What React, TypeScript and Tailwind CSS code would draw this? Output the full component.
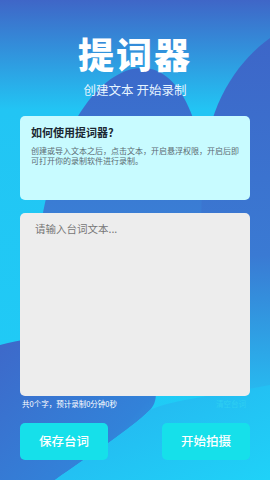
import { useState } from 'react';

function Backdrop() {
  return (
    <svg
      className="absolute inset-0 w-full h-full"
      viewBox="0 0 270 480"
      preserveAspectRatio="none"
      aria-hidden="true"
    >
      <defs>
        <linearGradient id="base" x1="0" y1="0" x2="0" y2="1">
          <stop offset="0" stopColor="#3f66c7" />
          <stop offset="0.23" stopColor="#22c5f4" />
          <stop offset="1" stopColor="#1fcdf6" />
        </linearGradient>
        <linearGradient id="hill" x1="0" y1="0" x2="0" y2="1">
          <stop offset="0" stopColor="#3b69ca" />
          <stop offset="1" stopColor="#3a80d6" />
        </linearGradient>
        <linearGradient id="side" x1="0" y1="0" x2="0" y2="1">
          <stop offset="0" stopColor="#3d66c8" />
          <stop offset="0.6" stopColor="#3a7ad3" />
          <stop offset="1" stopColor="#26bdf1" />
        </linearGradient>
        <linearGradient id="low" x1="0" y1="0" x2="1" y2="1">
          <stop offset="0" stopColor="#3e68c9" />
          <stop offset="0.7" stopColor="#3282d9" />
          <stop offset="1" stopColor="#2aa5e8" />
        </linearGradient>
        <linearGradient id="lowright" x1="0" y1="0" x2="1" y2="1">
          <stop offset="0" stopColor="#27b0ee" />
          <stop offset="1" stopColor="#1fd2f8" />
        </linearGradient>
      </defs>
      <rect x="0" y="0" width="270" height="480" fill="url(#base)" />
      <path d="M40 230 C55 130 100 68 142 68 C184 68 205 130 215 230 Z" fill="url(#hill)" />
      <path d="M270 38 C240 60 214 95 205 150 C198 220 200 300 215 400 L270 400 Z" fill="url(#side)" />
      <path d="M0 345 C50 332 110 330 140 360 C158 380 160 400 150 410 C130 430 90 455 55 480 L0 480 Z" fill="url(#low)" />
      <path d="M150 410 C170 400 220 395 270 385 L270 480 L55 480 C90 455 130 430 150 410 Z" fill="url(#lowright)" />
    </svg>
  );
}

export default function App() {
  const [text, setText] = useState('');
  const count = text.replace(/\s/g, '').length;
  const secs = Math.round(count / 4);

  return (
    <div className="relative w-full h-[480px] overflow-hidden font-['Noto_Sans_CJK_SC',sans-serif]">
      <Backdrop />
      <div className="relative flex flex-col px-5">
        <h1 className="pt-[33px] text-center text-[36px] leading-[40px] font-black text-white tracking-[2px]">
          提词器
        </h1>
        <p className="mt-[9px] text-center text-[12.5px] leading-[16px] text-[#e6f4ff]">
          创建文本 开始录制
        </p>

        {/* how-to card */}
        <div className="mt-[18px] h-[84px] rounded-[5px] bg-[#c8fbff] pt-[9px] px-[11px]">
          <p className="text-[11px] leading-[14px] font-bold text-[#1b2832]">如何使用提词器?</p>
          <p className="mt-[7px] text-[8px] leading-[10px] text-[#5b6a72]">
            创建或导入文本之后，点击文本，开启悬浮权限，开启后即可打开你的录制软件进行录制。
          </p>
        </div>

        <textarea
          value={text}
          onChange={(e) => setText(e.target.value)}
          placeholder="请输入台词文本..."
          className="mt-[13px] h-[183px] w-full resize-none rounded-[5px] bg-[#ededed] px-[15px] pt-[9px] text-[10.5px] leading-[14px] text-[#333] placeholder:text-[#767676] outline-none"
        />

        <div className="mt-[3px] flex items-center justify-between px-[2px] leading-[10px]">
          <span className="text-[7.5px] text-white">
            共{count}个字，预计录制{Math.floor(secs / 60)}分钟{secs % 60}秒
          </span>
          <button type="button" onClick={() => setText('')} className="mr-[2px] text-[7.5px] text-[#2fcff2]">
            清空台词
          </button>
        </div>

        <div className="mt-[14px] flex justify-between">
          <button type="button" className="h-[37px] w-[88px] rounded-[5px] bg-[#16e0ea] text-[12.5px] font-medium text-white">
            保存台词
          </button>
          <button type="button" className="h-[37px] w-[88px] rounded-[5px] bg-[#16e0ea] text-[12.5px] font-medium text-white">
            开始拍摄
          </button>
        </div>
      </div>
    </div>
  );
}
